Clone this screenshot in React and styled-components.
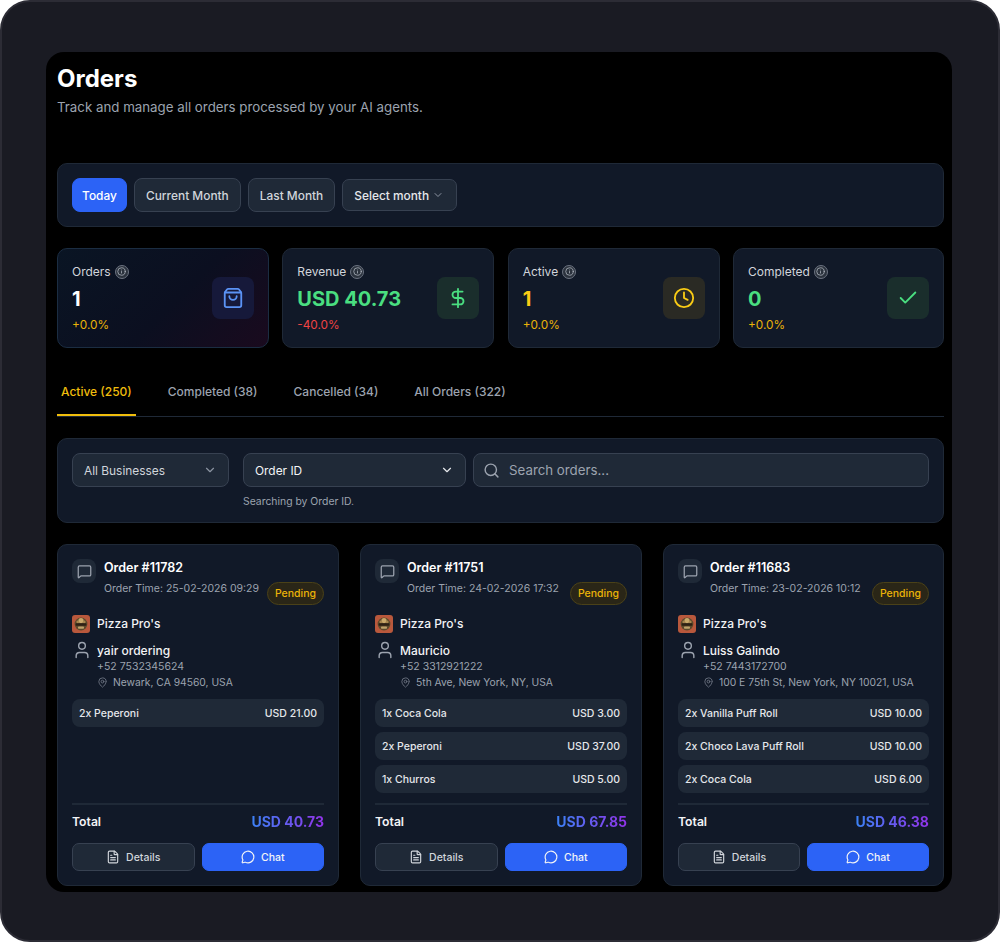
import styled, { createGlobalStyle } from "styled-components";
import {
  Check,
  ChevronDown,
  Clock,
  DollarSign,
  FileText,
  Info,
  MapPin,
  MessageCircle,
  MessageSquare,
  Search,
  ShoppingBag,
  User,
} from "lucide-react";

const stats = [
  { label: "Orders", value: "1", change: "+0.0%", tone: "white", icon: ShoppingBag, accent: "#5b93f5", tile: "#16193a", glow: true },
  { label: "Revenue", value: "USD 40.73", change: "-40.0%", tone: "#4ade80", icon: DollarSign, accent: "#4ade80", tile: "#1a2e2c", down: true },
  { label: "Active", value: "1", change: "+0.0%", tone: "#facc15", icon: Clock, accent: "#facc15", tile: "#2a2a24" },
  { label: "Completed", value: "0", change: "+0.0%", tone: "#4ade80", icon: Check, accent: "#4ade80", tile: "#1a2e2c" },
];

const tabs = ["Active (250)", "Completed (38)", "Cancelled (34)", "All Orders (322)"];

const orders = [
  {
    id: "11782",
    time: "25-02-2026 09:29",
    name: "yair ordering",
    phone: "+52 7532345624",
    address: "Newark, CA 94560, USA",
    total: "USD 40.73",
    items: [["2x Peperoni", "USD 21.00"]],
  },
  {
    id: "11751",
    time: "24-02-2026 17:32",
    name: "Mauricio",
    phone: "+52 3312921222",
    address: "5th Ave, New York, NY, USA",
    total: "USD 67.85",
    items: [
      ["1x Coca Cola", "USD 3.00"],
      ["2x Peperoni", "USD 37.00"],
      ["1x Churros", "USD 5.00"],
    ],
  },
  {
    id: "11683",
    time: "23-02-2026 10:12",
    name: "Luiss Galindo",
    phone: "+52 7443172700",
    address: "100 E 75th St, New York, NY 10021, USA",
    total: "USD 46.38",
    items: [
      ["2x Vanilla Puff Roll", "USD 10.00"],
      ["2x Choco Lava Puff Roll", "USD 10.00"],
      ["2x Coca Cola", "USD 6.00"],
    ],
  },
];

const PizzaLogo = () => (
  <svg width="18" height="18" viewBox="0 0 18 18">
    <rect width="18" height="18" rx="3" fill="#b9583c" />
    <circle cx="9" cy="9" r="6.4" fill="#5d4a2c" />
    <circle cx="9" cy="5.6" r="2.6" fill="#c9a86a" />
    <circle cx="5.8" cy="7" r="1.4" fill="#a8874f" />
    <circle cx="12.2" cy="7" r="1.4" fill="#a8874f" />
    <rect x="3.6" y="8.2" width="10.8" height="2.6" rx="0.8" fill="#2e2114" />
    <rect x="6" y="11.6" width="6" height="2.2" rx="0.8" fill="#bfa26b" />
  </svg>
);

const App = () => (
  <>
    <GlobalStyle />
    <Frame>
      <Panel>
        <Title>Orders</Title>
        <Subtitle>Track and manage all orders processed by your AI agents.</Subtitle>

        <Section $top={46}>
          <DateRow>
            <DateButton $active>Today</DateButton>
            <DateButton>Current Month</DateButton>
            <DateButton>Last Month</DateButton>
            <MonthSelect>
              Select month
              <ChevronDown size={12} color="#8b93a1" />
            </MonthSelect>
          </DateRow>
        </Section>

        <StatGrid>
          {stats.map((stat) => (
            <StatCard key={stat.label} $glow={stat.glow}>
              <div>
                <StatLabel>
                  {stat.label}
                  <InfoDot>
                    <Info size={9} />
                  </InfoDot>
                </StatLabel>
                <StatValue $tone={stat.tone}>{stat.value}</StatValue>
                <StatChange $down={stat.down}>{stat.change}</StatChange>
              </div>
              <StatIcon $tile={stat.tile}>
                <stat.icon size={22} color={stat.accent} strokeWidth={2} />
              </StatIcon>
            </StatCard>
          ))}
        </StatGrid>

        <TabBar>
          {tabs.map((tab, i) => (
            <Tab key={tab} $active={i === 0}>
              {tab}
            </Tab>
          ))}
        </TabBar>

        <Section $top={21}>
          <FilterRow>
            <FilterSelect $width={157}>
              All Businesses
              <ChevronDown size={14} color="#8b93a1" />
            </FilterSelect>
            <SearchBy>
              <FilterSelect $width={223} $bright>
                Order ID
                <ChevronDown size={14} color="#e5e7eb" />
              </FilterSelect>
              <Helper>Searching by Order ID.</Helper>
            </SearchBy>
            <SearchBox>
              <Search size={17} color="#9ca3af" />
              Search orders...
            </SearchBox>
          </FilterRow>
        </Section>

        <OrderGrid>
          {orders.map((order) => (
            <OrderCard key={order.id}>
              <OrderHead>
                <HeadIcon>
                  <MessageSquare size={15} color="#9ca3af" />
                </HeadIcon>
                <HeadText>
                  <OrderId>Order #{order.id}</OrderId>
                  <OrderMeta>
                    <OrderTime>Order Time: {order.time}</OrderTime>
                    <Badge>Pending</Badge>
                  </OrderMeta>
                </HeadText>
              </OrderHead>

              <Business>
                <PizzaLogo />
                Pizza Pro's
              </Business>

              <Customer>
                <User size={20} color="#9ca3af" strokeWidth={1.7} />
                <CustomerInfo>
                  <CustomerName>{order.name}</CustomerName>
                  <Muted>{order.phone}</Muted>
                  <Address>
                    <MapPin size={11} color="#6b7280" />
                    {order.address}
                  </Address>
                </CustomerInfo>
              </Customer>

              <Items>
                {order.items.map(([name, price]) => (
                  <Item key={name}>
                    <span>{name}</span>
                    <span>{price}</span>
                  </Item>
                ))}
              </Items>

              <Footer>
                <TotalRow>
                  <TotalLabel>Total</TotalLabel>
                  <TotalValue>{order.total}</TotalValue>
                </TotalRow>
                <Actions>
                  <ActionButton>
                    <FileText size={14} />
                    Details
                  </ActionButton>
                  <ActionButton $primary>
                    <MessageCircle size={14} />
                    Chat
                  </ActionButton>
                </Actions>
              </Footer>
            </OrderCard>
          ))}
        </OrderGrid>
      </Panel>
    </Frame>
  </>
);

export default App;

const GlobalStyle = createGlobalStyle`
  html, body {
    margin: 0;
    background: #ffffff;
  }
  * {
    box-sizing: border-box;
  }
  body {
    font-family: "Inter", "Liberation Sans", sans-serif;
    -webkit-font-smoothing: antialiased;
  }
`;

const Frame = styled.div`
  width: 1000px;
  height: 942px;
  padding: 50px 46px 48px 44px;
  background: #1a1b23;
  border: 2px solid #2c2c35;
  border-radius: 30px;
  overflow: hidden;
`;

const Panel = styled.main`
  height: 840px;
  padding: 12px 8px 0 11px;
  background: #000000;
  border-radius: 18px;
  overflow: hidden;
`;

const Title = styled.h1`
  margin: 0;
  font-size: 24px;
  line-height: 30px;
  font-weight: 700;
  color: #ffffff;
`;

const Subtitle = styled.p`
  margin: 3px 0 0;
  font-size: 13.3px;
  line-height: 20px;
  color: #9ca3af;
`;

const Section = styled.section`
  margin-top: ${({ $top }) => $top}px;
  padding: 14px;
  background: #111928;
  border: 1px solid #1f2937;
  border-radius: 10px;
`;

const DateRow = styled.div`
  display: flex;
  align-items: center;
  gap: 7px;
`;

const DateButton = styled.button`
  width: ${({ $active }) => ($active ? "55px" : "auto")};
  height: 34px;
  padding: ${({ $active }) => ($active ? "0" : "0 11px")};
  font: 500 11.9px "Inter", sans-serif;
  white-space: nowrap;
  color: ${({ $active }) => ($active ? "#ffffff" : "#d1d5db")};
  background: ${({ $active }) => ($active ? "#2c63f6" : "#1f2937")};
  border: 1px solid ${({ $active }) => ($active ? "#2c63f6" : "#374151")};
  border-radius: 8px;
`;

const MonthSelect = styled.div`
  display: flex;
  align-items: center;
  justify-content: space-between;
  width: 115px;
  height: 32px;
  padding: 0 12px 0 11px;
  font-size: 11.9px;
  font-weight: 500;
  white-space: nowrap;
  color: #e5e7eb;
  background: #1f2937;
  border: 1px solid #374151;
  border-radius: 7px;
`;

const StatGrid = styled.div`
  display: grid;
  grid-template-columns: 212px 212px 212px 1fr;
  gap: 13.33px;
  margin-top: 21px;
`;

const StatCard = styled.div`
  display: flex;
  align-items: center;
  justify-content: space-between;
  height: 100px;
  padding: 0 14px;
  background: ${({ $glow }) =>
    $glow ? "linear-gradient(135deg, #0a1524 0%, #0b0f20 55%, #1a0a1e 100%)" : "#111928"};
  border: 1px solid ${({ $glow }) => ($glow ? "#1b2d42" : "#1f2937")};
  border-radius: 10px;
`;

const StatLabel = styled.div`
  display: flex;
  align-items: center;
  gap: 4px;
  font-size: 12px;
  line-height: 16px;
  color: #d1d5db;
`;

const InfoDot = styled.span`
  display: flex;
  align-items: center;
  justify-content: center;
  width: 14px;
  height: 14px;
  color: #b6bcc6;
  background: #2b323d;
  border: 1px solid #6b7280;
  border-radius: 50%;
`;

const StatValue = styled.div`
  margin-top: 5px;
  font-size: 20px;
  line-height: 28px;
  font-weight: 700;
  color: ${({ $tone }) => $tone};
`;

const StatChange = styled.div`
  margin-top: 4px;
  font-size: 11.8px;
  line-height: 16px;
  color: ${({ $down }) => ($down ? "#ef4444" : "#eab308")};
`;

const StatIcon = styled.div`
  display: flex;
  align-items: center;
  justify-content: center;
  width: 42px;
  height: 42px;
  background: ${({ $tile }) => $tile};
  border-radius: 8px;
`;

const TabBar = styled.nav`
  display: flex;
  gap: 28px;
  height: 69px;
  padding-top: 27px;
  border-bottom: 1px solid #1f2937;
`;

const Tab = styled.div`
  height: 41px;
  padding: 9px 4px 0;
  font-size: 12px;
  line-height: 16px;
  font-weight: 500;
  color: ${({ $active }) => ($active ? "#f0bd0c" : "#9ca3af")};
  border-bottom: 2px solid ${({ $active }) => ($active ? "#f0bd0c" : "transparent")};
`;

const FilterRow = styled.div`
  display: flex;
  align-items: flex-start;
  gap: 7px;
`;

const FilterSelect = styled.div`
  display: flex;
  align-items: center;
  justify-content: space-between;
  flex: none;
  width: ${({ $width }) => $width}px;
  height: 34px;
  padding: 0 11px;
  font-size: 11.9px;
  color: ${({ $bright }) => ($bright ? "#f3f4f6" : "#d1d5db")};
  background: #1f2937;
  border: 1px solid #374151;
  border-radius: 8px;
`;

const SearchBy = styled.div`
  margin-left: 7px;
`;

const Helper = styled.div`
  margin-top: 8px;
  font-size: 10.4px;
  line-height: 13px;
  color: #9ca3af;
`;

const SearchBox = styled.div`
  flex: 1;
  display: flex;
  align-items: center;
  gap: 9px;
  height: 34px;
  padding: 0 9px;
  font-size: 13.3px;
  color: #9ca3af;
  background: #1f2937;
  border: 1px solid #374151;
  border-radius: 8px;
`;

const OrderGrid = styled.div`
  display: grid;
  grid-template-columns: 282px 282px 1fr;
  gap: 21px;
  margin-top: 21px;
`;

const OrderCard = styled.article`
  display: flex;
  flex-direction: column;
  height: 342px;
  padding: 14px;
  background: #111928;
  border: 1px solid #1f2937;
  border-radius: 10px;
`;

const OrderHead = styled.header`
  display: flex;
  gap: 8px;
`;

const HeadIcon = styled.div`
  display: flex;
  align-items: center;
  justify-content: center;
  flex: none;
  width: 24px;
  height: 24px;
  background: #1f2937;
  border-radius: 8px;
`;

const HeadText = styled.div`
  flex: 1;
  min-width: 0;
  padding-top: 1px;
`;

const OrderId = styled.div`
  font-size: 12.5px;
  line-height: 16px;
  font-weight: 600;
  color: #ffffff;
`;

const OrderMeta = styled.div`
  display: flex;
  align-items: flex-start;
  justify-content: space-between;
  margin-top: 6px;
`;

const OrderTime = styled.span`
  font-size: 10.5px;
  line-height: 14px;
  color: #9ca3af;
  white-space: nowrap;
`;

const Badge = styled.span`
  display: flex;
  align-items: center;
  height: 23px;
  padding: 0 7px;
  font-size: 10.5px;
  font-weight: 500;
  color: #eab308;
  background: #2a2617;
  border: 1px solid #4a4118;
  border-radius: 12px;
`;

const Business = styled.div`
  display: flex;
  align-items: center;
  gap: 7px;
  margin-top: 10px;
  font-size: 12px;
  line-height: 18px;
  font-weight: 500;
  color: #f3f4f6;
`;

const Customer = styled.div`
  display: flex;
  gap: 5px;
  margin-top: 7px;
`;

const CustomerInfo = styled.div`
  min-width: 0;
  padding-top: 3px;
`;

const CustomerName = styled.div`
  font-size: 12px;
  line-height: 16px;
  font-weight: 500;
  color: #f3f4f6;
`;

const Muted = styled.div`
  font-size: 10.5px;
  line-height: 16px;
  color: #9ca3af;
`;

const Address = styled(Muted)`
  display: flex;
  align-items: center;
  gap: 5px;
  font-size: 10.3px;
  line-height: 14px;
  white-space: nowrap;
`;

const Items = styled.div`
  display: flex;
  flex-direction: column;
  gap: 5px;
  margin-top: 10px;
`;

const Item = styled.div`
  display: flex;
  align-items: center;
  justify-content: space-between;
  height: 28px;
  padding: 0 7px;
  font-size: 10.5px;
  font-weight: 500;
  color: #e5e7eb;
  background: #1f2937;
  border-radius: 8px;
`;

const Footer = styled.footer`
  margin-top: auto;
  padding-top: 8px;
  border-top: 2px solid #1f2937;
`;

const TotalRow = styled.div`
  display: flex;
  align-items: center;
  justify-content: space-between;
`;

const TotalLabel = styled.span`
  font-size: 12.2px;
  line-height: 18px;
  font-weight: 600;
  color: #f3f4f6;
`;

const TotalValue = styled.span`
  font-size: 14px;
  line-height: 18px;
  font-weight: 700;
  color: transparent;
  background: linear-gradient(90deg, #3b82f6, #9333ea);
  -webkit-background-clip: text;
  background-clip: text;
`;

const Actions = styled.div`
  display: grid;
  grid-template-columns: 1fr 1fr;
  gap: 7px;
  margin-top: 12px;
`;

const ActionButton = styled.button`
  display: flex;
  align-items: center;
  justify-content: center;
  gap: 6px;
  height: 28px;
  font: 500 10.5px "Inter", sans-serif;
  color: ${({ $primary }) => ($primary ? "#f3f4f6" : "#d1d5db")};
  background: ${({ $primary }) => ($primary ? "#2c63f6" : "#1f2937")};
  border: 1px solid ${({ $primary }) => ($primary ? "#2c63f6" : "#374151")};
  border-radius: 7px;
`;
